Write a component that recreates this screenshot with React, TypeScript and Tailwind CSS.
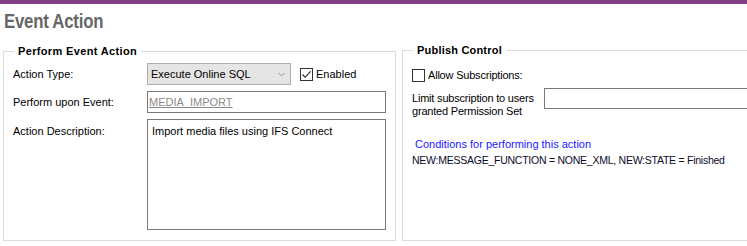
import { ChevronDown } from 'lucide-react'

function CheckBox({ checked }: { checked?: boolean }) {
  return (
    <span className="inline-flex h-[13px] w-[13px] shrink-0 items-center justify-center border border-[#333] bg-white">
      {checked ? (
        <svg width="11" height="11" viewBox="0 0 11 11" fill="none">
          <path d="M1.5 5.5 L4.2 8.3 L9.6 2.4" stroke="#222" strokeWidth="1.1" />
        </svg>
      ) : null}
    </span>
  )
}

export default function App() {
  return (
    <div className="h-[246px] w-[747px] overflow-hidden bg-white font-['Liberation_Sans',Arial,sans-serif] text-[11px] text-black">
      <div className="h-[4px] bg-[#833f88]" />
      <h1 className="ml-[4px] mt-[4px] h-[35px] origin-left scale-x-[0.8] text-[21px] font-bold leading-[26px] tracking-[-0.3px] text-[#666]">
        Event Action
      </h1>

      <div className="flex gap-[6px] pl-[3px]">
        {/* Left group */}
        <fieldset className="mt-[1px] h-[197px] w-[392px] shrink-0 border border-[#dcdcdc] pl-[9px] pr-[9px]">
          <legend className="ml-[1px] px-[4px] text-[11px] font-bold leading-[14px] tracking-[0.35px]">Perform Event Action</legend>
          <div className="grid grid-cols-[134px_1fr] gap-y-[6px] pt-[5px]">
            <label className="flex items-center">Action Type:</label>
            <div className="flex items-center">
              <div className="flex h-[22px] w-[144px] items-center justify-between border border-[#adadad] bg-[#e5e5e5] pl-[3px] pr-[3px]">
                <span>Execute Online SQL</span>
                <ChevronDown size={11} strokeWidth={1.2} className="text-[#555]" />
              </div>
              <div className="ml-[9px] flex items-center gap-[3px]">
                <CheckBox checked />
                <span>Enabled</span>
              </div>
            </div>

            <label className="flex items-center">Perform upon Event:</label>
            <div className="flex h-[22px] w-[239px] items-center border border-[#7a7a7a] pl-[1px] text-[#8a8a8a] underline">
              MEDIA_IMPORT
            </div>

            <label className="pt-[4px]">Action Description:</label>
            <div className="h-[111px] w-[239px] border border-[#7a7a7a] px-[4px] pt-[3px]">
              Import media files using IFS Connect
            </div>
          </div>
        </fieldset>

        {/* Right group */}
        <fieldset className="h-[198px] w-[360px] shrink-0 border border-[#dcdcdc] pl-[9px] tracking-[-0.2px]">
          <legend className="ml-[1px] px-[4px] text-[11px] font-bold leading-[14px] tracking-[0.2px]">Publish Control</legend>
          <div className="flex items-center gap-[3px] pt-[10px]">
            <CheckBox />
            <span>Allow Subscriptions:</span>
          </div>
          <div className="mt-[4px] flex items-start">
            <div className="w-[132px] pt-[4px] leading-[13px]">
              Limit subscription to users
              <br />
              granted Permission Set
            </div>
            <div className="h-[21px] flex-1 border border-[#7a7a7a]" />
          </div>
          <div className="mt-[18px] pl-[3px] leading-[16px] tracking-normal text-[#1a1aff]">Conditions for performing this action</div>
          <div className="text-[10.5px] leading-[16px] tracking-[-0.25px] text-[#0a0a2a]">NEW:MESSAGE_FUNCTION = NONE_XML, NEW:STATE = Finished</div>
        </fieldset>
      </div>
    </div>
  )
}
